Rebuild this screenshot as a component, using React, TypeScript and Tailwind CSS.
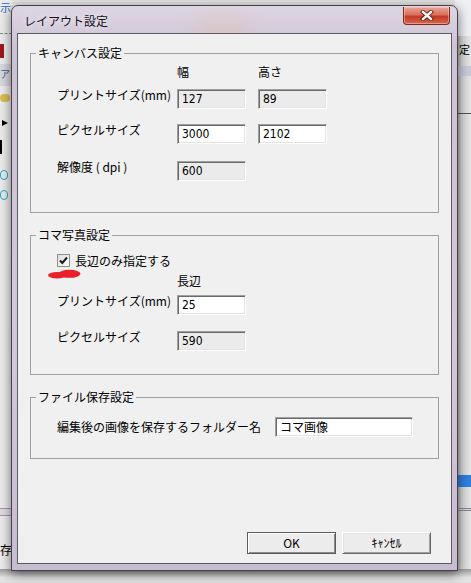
import type { ReactNode } from "react";

const JP = "font-['Noto_Sans_CJK_JP',sans-serif]";
const NUM = "font-['Liberation_Sans_Narrow','DejaVu_Sans_Condensed','Liberation_Sans',sans-serif]";

function GroupBox({ title, className, children }: { title: string; className: string; children: ReactNode }) {
  return (
    <div className={`relative mx-[12px] border border-[#a0a0a0] ${className}`}>
      <span className="absolute -top-[9px] left-[5px] bg-[#f0f0f0] px-[2px] text-[12px] leading-[16px] text-black">
        {title}
      </span>
      {children}
    </div>
  );
}

function Field({ value, readOnly, wide }: { value: string; readOnly?: boolean; wide?: boolean }) {
  return (
    <div
      className={`flex h-[20px] items-center border border-t-[#a0a0a0] border-l-[#a0a0a0] border-r-white border-b-white pl-[4px] shadow-[inset_1px_1px_0_#696969,inset_-1px_-1px_0_#e3e3e3] ${
        wide ? "w-[138px]" : "w-[69px]"
      } ${readOnly ? "bg-[#ebebeb]" : "bg-white"}`}
    >
      <span className={`${wide ? JP : NUM} text-[12px] leading-none text-black`}>{value}</span>
    </div>
  );
}

function Row({ label, className, children }: { label: string; className: string; children: ReactNode }) {
  return (
    <div className={`flex h-[20px] items-start ${className}`}>
      <span className="-mt-[2px] w-[120px] whitespace-pre text-[12px] leading-[16px] text-black">{label}</span>
      <div className="flex gap-[12px]">{children}</div>
    </div>
  );
}

function CloseButton() {
  return (
    <div className="absolute right-[7px] top-[1px] flex h-[18px] w-[47px] items-center justify-center rounded-b-[4px] border border-t-0 border-[#7b2a1f] bg-[linear-gradient(#eba596,#d9705d_45%,#c23a22_55%,#d8674f)] shadow-[inset_0_0_0_1px_rgba(255,220,210,0.45)]">
      <svg width="14" height="11" viewBox="0 0 14 11">
        <path d="M3 2 L11 9 M11 2 L3 9" stroke="#5a1b12" strokeWidth="4.2" strokeLinecap="square" />
        <path d="M3 2 L11 9 M11 2 L3 9" stroke="#ffffff" strokeWidth="2.4" strokeLinecap="square" />
      </svg>
    </div>
  );
}

function Backdrop() {
  return (
    <>
      {/* left strip: app behind */}
      <div className="absolute left-0 top-0 h-full w-[12px] bg-[#ececec]" />
      <span className="absolute left-0 top-0 text-[11px] leading-[14px] text-[#2a6cc0]">示</span>
      <div className="absolute left-0 top-[33px] w-[12px] border-t border-dashed border-[#7a8aa0]" />
      <div className="absolute left-0 top-[44px] h-[14px] w-[4px] bg-[#a01818]" />
      <div className="absolute left-0 top-[64px] h-[22px] w-[12px] bg-[#d8d8de]" />
      <span className="absolute left-0 top-[67px] text-[10px] leading-[14px] text-[#3a5a9a]">ア</span>
      <div className="absolute left-0 top-[94px] h-[8px] w-[10px] rounded-sm bg-[#d8c050]" />
      <div className="absolute left-[2px] top-[120px] h-[6px] w-[6px] bg-black [clip-path:polygon(0_0,100%_50%,0_100%)]" />
      <div className="absolute left-0 top-[140px] h-[14px] w-[2px] bg-black" />
      <div className="absolute left-0 top-[170px] h-[10px] w-[8px] rounded-full border border-[#2aa8c8]" />
      <div className="absolute left-0 top-[190px] h-[10px] w-[8px] rounded-full border border-[#2aa8c8]" />
      <div className="absolute left-0 top-[508px] h-[8px] w-[12px] border-y border-[#a0a0a0] bg-[#e4dce8]" />
      <span className="absolute left-0 top-[542px] text-[12px] leading-[16px] text-black">存</span>
      {/* right strip */}
      <div className="absolute right-0 top-0 h-full w-[16px] bg-[linear-gradient(90deg,#9a9a9a,#d6d6d6_40%,#e6e6e6)]" />
      <div className="absolute right-0 top-0 h-[36px] w-[16px] bg-[#eef0f4]" />
      <span className="absolute left-[459px] top-[42px] whitespace-nowrap text-[11px] leading-[14px] text-black">定</span>
      <div className="absolute right-0 top-[66px] h-[10px] w-[16px] bg-[#c9cbd8]" />
      <div className="absolute right-0 top-[113px] h-[1px] w-[16px] bg-[#505050]" />
      <div className="absolute right-0 top-[475px] h-[12px] w-[16px] bg-[#2f7fdc]" />
      <div className="absolute right-0 top-[508px] h-[3px] w-[16px] border-y border-[#8a8a8a] bg-[#d8d0e0]" />
      {/* bottom strip */}
      <div className="absolute bottom-0 left-0 h-[14px] w-full bg-[linear-gradient(#9a9a9a,#e2e2e2_60%)]" />
    </>
  );
}

export default function App() {
  return (
    <div className={`relative h-[583px] w-[471px] overflow-hidden bg-[#e4e4e4] ${JP}`}>
      <Backdrop />

      <div className="absolute left-[11px] top-[5px] flex h-[566px] w-[447px] flex-col rounded-t-[7px] border border-[#45404a] bg-[linear-gradient(#ddd6e2,#cdc1d4_8%,#d3c8da_60%,#c8bcd0)] px-[5px] pb-[6px] shadow-[0_3px_12px_rgba(0,0,0,0.55)]">
        <div className="pointer-events-none absolute left-[185px] top-[14px] h-[16px] w-[50px] rounded-full bg-[#e2b894] opacity-40 blur-[10px]" />
        <CloseButton />
        <div className="relative flex h-[27px] items-center pl-[7px] pt-[2px]">
          <span className="text-[12px] leading-[16px] text-[#141018] [text-shadow:0_0_6px_rgba(255,255,255,0.95)]">
            レイアウト設定
          </span>
        </div>

        <div className="relative flex h-[531px] flex-col border border-[#5e5a62] bg-[#f0f0f0]">
          <GroupBox title="キャンバス設定" className="mt-[19px] h-[160px]">
            <div className="pl-[26px] pt-[10px]">
              <div className="flex h-[16px] text-[12px] leading-[16px] text-black">
                <span className="w-[120px]" />
                <span className="w-[81px]">幅</span>
                <span>高さ</span>
              </div>
              <Row label="プリントサイズ(mm)" className="mt-[9px]">
                <Field value="127" readOnly />
                <Field value="89" readOnly />
              </Row>
              <Row label="ピクセルサイズ" className="mt-[15px]">
                <Field value="3000" />
                <Field value="2102" />
              </Row>
              <Row label="解像度 ( dpi )" className="mt-[17px]">
                <Field value="600" readOnly />
              </Row>
            </div>
          </GroupBox>

          <GroupBox title="コマ写真設定" className="mt-[22px] h-[140px]">
            <svg className="absolute left-[17px] top-[33px]" width="33" height="10" viewBox="0 0 33 10">
              <ellipse cx="9" cy="6.2" rx="9" ry="3.2" fill="#ea1f29" />
              <ellipse cx="21.5" cy="4.8" rx="11" ry="4" fill="#ea1f29" />
            </svg>
            <div className="pl-[26px] pt-[18px]">
              <div className="flex h-[13px] items-center">
                <div className="flex h-[13px] w-[13px] items-center justify-center border border-[#8e8f8f] bg-[linear-gradient(135deg,#dcdcdc,#ffffff)]">
                  <svg width="11" height="11" viewBox="0 0 11 11">
                    <path d="M2 5.5 L4.3 8 L9 2.5" fill="none" stroke="#1c1c1c" strokeWidth="2" />
                  </svg>
                </div>
                <span className="ml-[5px] text-[12px] leading-[16px] text-black">長辺のみ指定する</span>
              </div>
              <div className="mt-[6px] flex h-[16px] text-[12px] leading-[16px] text-black">
                <span className="w-[120px]" />
                <span>長辺</span>
              </div>
              <Row label="プリントサイズ(mm)" className="mt-[6px]">
                <Field value="25" />
              </Row>
              <Row label="ピクセルサイズ" className="mt-[16px]">
                <Field value="590" readOnly />
              </Row>
            </div>
          </GroupBox>

          <GroupBox title="ファイル保存設定" className="mt-[22px] h-[62px]">
            <div className="flex items-center pl-[26px] pt-[19px]">
              <span className="w-[218px] text-[12px] leading-[16px] text-black">編集後の画像を保存するフォルダー名</span>
              <Field value="コマ画像" wide />
            </div>
          </GroupBox>

          <div className="mt-auto flex justify-end gap-[6px] pb-[9px] pr-[20px]">
            <button className="flex h-[22px] w-[89px] items-center justify-center border border-[#5c5c5c] bg-[#ececec] text-[12px] leading-none text-black shadow-[inset_1px_1px_0_#ffffff,inset_-1px_-1px_0_#8a8a8a]">
              OK
            </button>
            <button className="flex h-[22px] w-[89px] items-center justify-center border border-t-white border-l-white border-r-[#696969] border-b-[#696969] bg-[#ececec] text-[12px] leading-none text-black shadow-[inset_1px_1px_0_#e3e3e3,inset_-1px_-1px_0_#a0a0a0]">
              ｷｬﾝｾﾙ
            </button>
          </div>
        </div>
      </div>
    </div>
  );
}
